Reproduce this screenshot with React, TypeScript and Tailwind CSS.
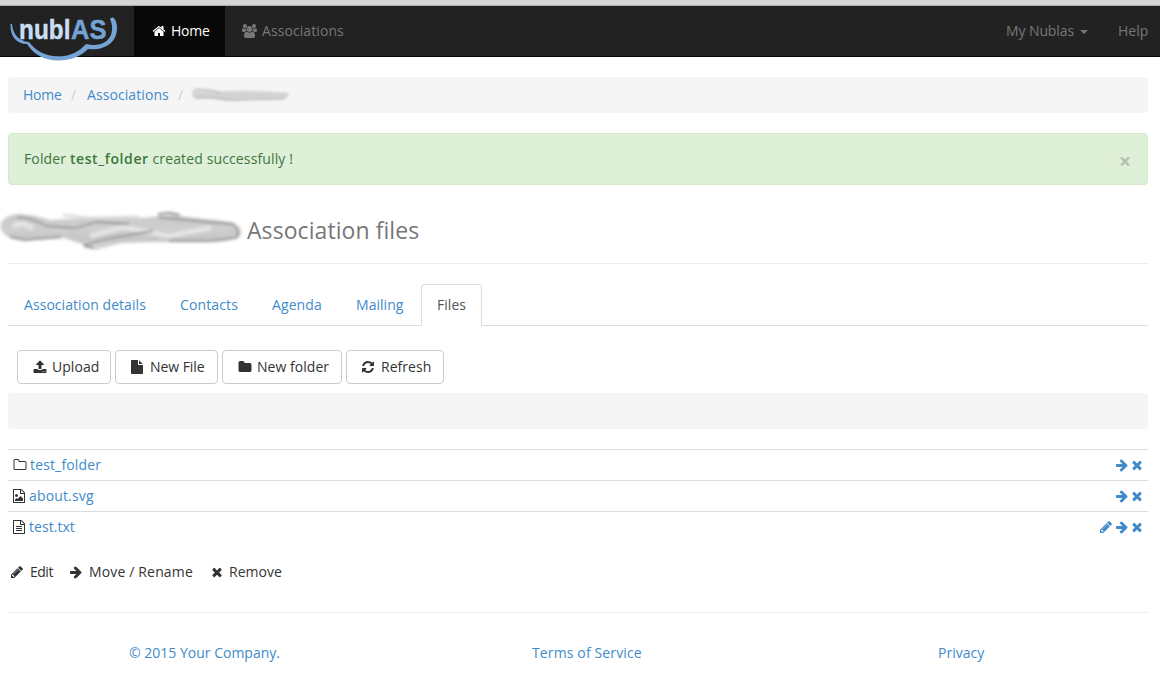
import type { ReactNode } from "react";

const paths = {
  home: "M1472 992v480q0 26-19 45t-45 19h-384v-384h-256v384h-384q-26 0-45-19t-19-45v-480q0-1 .5-3t.5-3l575-474 575 474q1 2 1 6zm223-69l-62 74q-8 9-21 11h-3q-13 0-21-7l-692-577-692 577q-12 8-24 7-13-2-21-11l-62-74q-8-10-7-23.5t11-21.5l719-599q32-26 76-26t76 26l244 204v-195q0-14 9-23t23-9h192q14 0 23 9t9 23v408l219 182q10 8 11 21.5t-7 23.5z",
  users: "M529 896q-162 5-265 128h-134q-82 0-138-40.5t-56-118.5q0-353 124-353 6 0 43.5 21t97.5 42.5 119 21.5q67 0 133-23-5 37-5 66 0 139 81 256zm1071 637q0 120-73 189.5t-194 69.5h-874q-121 0-194-69.5t-73-189.5q0-53 3.5-103.5t14-109 26.5-108.5 43-97.5 62-81 85.5-53.5 111.5-20q10 0 43 21.5t73 48 107 48 135 21.5 135-21.5 107-48 73-48 43-21.5q61 0 111.5 20t85.5 53.5 62 81 43 97.5 26.5 108.5 14 109 3.5 103.5zm-1024-1277q0 106-75 181t-181 75-181-75-75-181 75-181 181-75 181 75 75 181zm704 384q0 159-112.5 271.5t-271.5 112.5-271.5-112.5-112.5-271.5 112.5-271.5 271.5-112.5 271.5 112.5 112.5 271.5zm576 225q0 78-56 118.5t-138 40.5h-134q-103-123-265-128 81-117 81-256 0-29-5-66 66 23 133 23 59 0 119-21.5t97.5-42.5 43.5-21q124 0 124 353zm-128-609q0 106-75 181t-181 75-181-75-75-181 75-181 181-75 181 75 75 181z",
  upload: "M1344 1472q0-26-19-45t-45-19-45 19-19 45 19 45 45 19 45-19 19-45zm256 0q0-26-19-45t-45-19-45 19-19 45 19 45 45 19 45-19 19-45zm128-224v320q0 40-28 68t-68 28h-1472q-40 0-68-28t-28-68v-320q0-40 28-68t68-28h427q21 56 70.5 92t110.5 36h256q61 0 110.5-36t70.5-92h427q40 0 68 28t28 68zm-325-648q-17 40-59 40h-256v448q0 26-19 45t-45 19h-256q-26 0-45-19t-19-45v-448h-256q-42 0-59-40-17-39 14-69l448-448q18-19 45-19t45 19l448 448q31 30 14 69z",
  file: "M1152 512v-472q22 14 36 28l408 408q14 14 28 36h-472zm-128 32q0 40 28 68t68 28h544v1056q0 40-28 68t-68 28h-1344q-40 0-68-28t-28-68v-1600q0-40 28-68t68-28h800v544z",
  folder: "M1728 608v704q0 92-66 158t-158 66h-1216q-92 0-158-66t-66-158v-960q0-92 66-158t158-66h320q92 0 158 66t66 158v32h672q92 0 158 66t66 158z",
  refresh: "M1639 1056q0 5-1 7-64 268-268 434.5t-478 166.5q-146 0-282.5-55t-243.5-157l-129 129q-19 19-45 19t-45-19-19-45v-448q0-26 19-45t45-19h448q26 0 45 19t19 45-19 45l-137 137q71 66 161 102t187 36q134 0 250-65t186-179q11-17 53-117 8-23 30-23h192q13 0 22.5 9.5t9.5 22.5zm25-800v448q0 26-19 45t-45 19h-448q-26 0-45-19t-19-45 19-45l138-138q-148-137-349-137-134 0-250 65t-186 179q-11 17-53 117-8 23-30 23h-199q-13 0-22.5-9.5t-9.5-22.5v-7q65-268 270-434.5t480-166.5q146 0 284 55.5t245 156.5l130-129q19-19 45-19t45 19 19 45z",
  folderOpen: "M1600 1312v-704q0-40-28-68t-68-28h-704q-40 0-68-28t-28-68v-64q0-40-28-68t-68-28h-320q-40 0-68 28t-28 68v960q0 40 28 68t68 28h1216q40 0 68-28t28-68zm128-704v704q0 92-66 158t-158 66h-1216q-92 0-158-66t-66-158v-960q0-92 66-158t158-66h320q92 0 158 66t66 158v32h672q92 0 158 66t66 158z",
  text: "M1596 380q28 28 48 76t20 88v1152q0 40-28 68t-68 28h-1344q-40 0-68-28t-28-68v-1600q0-40 28-68t68-28h896q40 0 88 20t76 48zm-444-244v376h376q-10-29-22-41l-313-313q-12-12-41-22zm384 1528v-1024h-416q-40 0-68-28t-28-68v-416h-768v1536h1280zm-1024-864q0-14 9-23t23-9h704q14 0 23 9t9 23v64q0 14-9 23t-23 9h-704q-14 0-23-9t-9-23v-64zm736 224q14 0 23 9t9 23v64q0 14-9 23t-23 9h-704q-14 0-23-9t-9-23v-64q0-14 9-23t23-9h704zm0 256q14 0 23 9t9 23v64q0 14-9 23t-23 9h-704q-14 0-23-9t-9-23v-64q0-14 9-23t23-9h704z",
  image: "M1596 380q28 28 48 76t20 88v1152q0 40-28 68t-68 28h-1344q-40 0-68-28t-28-68v-1600q0-40 28-68t68-28h896q40 0 88 20t76 48zm-444-244v376h376q-10-29-22-41l-313-313q-12-12-41-22zm384 1528v-1024h-416q-40 0-68-28t-28-68v-416h-768v1536h1280zm-128-448v320h-1024v-192l192-192 128 128 384-384zm-832-192q-80 0-136-56t-56-136 56-136 136-56 136 56 56 136-56 136-136 56z",
  arrow: "M1600 960q0 54-37 91l-651 651q-39 37-91 37-51 0-90-37l-75-75q-38-38-38-91t38-91l293-293h-704q-52 0-84.5-37.5t-32.5-90.5v-128q0-53 32.5-90.5t84.5-37.5h704l-293-294q-38-36-38-90t38-90l75-75q38-38 90-38 53 0 91 38l651 651q37 35 37 90z",
  times: "M1490 1322q0 40-28 68l-136 136q-28 28-68 28t-68-28l-294-294-294 294q-28 28-68 28t-68-28l-136-136q-28-28-28-68t28-68l294-294-294-294q-28-28-28-68t28-68l136-136q28-28 68-28t68 28l294 294 294-294q28-28 68-28t68 28l136 136q28 28 28 68t-28 68l-294 294 294 294q28 28 28 68z",
  pencil: "M491 1536l91-91-235-235-91 91v107h128v128h107zm523-928q0-22-22-22-10 0-17 7l-542 542q-7 7-7 17 0 22 22 22 10 0 17-7l542-542q7-7 7-17zm-54-192l416 416-832 832h-416v-416zm683 96q0 53-37 90l-166 166-416-416 166-165q36-38 90-38 53 0 91 38l235 234q37 39 37 91z",
};

type IconName = keyof typeof paths;

function Icon({ name, className = "" }: { name: IconName; className?: string }) {
  const wide = name === "users";
  return (
    <svg
      viewBox={wide ? "-64 0 1920 1792" : "0 0 1792 1792"}
      className={`${wide ? "w-[15px]" : "w-[14px]"} h-[14px] shrink-0 overflow-visible fill-current ${className}`}
    >
      <path d={paths[name]} />
    </svg>
  );
}

function Logo() {
  return (
    <svg viewBox="9 15 110 48" className="relative z-10 ml-[9px] mt-[9px] h-12 w-[110px] shrink-0 overflow-visible">
      <path
        d="M10.5 24C10 36 16 44 27 44C35 56 46 60.5 58 60.5C71 60.5 81 56 88 49C104 51 117 43 117 28C117 23 115.500 19 113 17.500Q111 17 110 19C115 29 112 46 92 45L86 44C78 53 69 56.300 58 56.300C45 56 36 51 29 42C19 41 13 35 12 24Z"
        fill="#75a3d5"
      />
      <g fontFamily="Liberation Sans" fontWeight="700" fontSize="28.500" strokeWidth=".5">
        <text x="19" y="38.500" textLength="51.500" lengthAdjust="spacingAndGlyphs" fill="#c9def2" stroke="#c9def2">nubl</text>
        <text x="71" y="38.500" textLength="35.500" lengthAdjust="spacingAndGlyphs" fill="#75a3d5" stroke="#75a3d5">AS</text>
      </g>
    </svg>
  );
}

function Tab({ children, className }: { children: ReactNode; className: string }) {
  return <a className={`h-[42px] shrink-0 whitespace-nowrap pl-4 pt-[11px] ${className}`}>{children}</a>;
}

function Button({ icon, iconClass = "mr-[5px]", children, className }: { icon: IconName; iconClass?: string; children: ReactNode; className: string }) {
  return (
    <button className={`flex h-[34px] items-center whitespace-nowrap rounded border border-[#ccc] pl-[15px] ${className}`}>
      <Icon name={icon} className={iconClass} />
      {children}
    </button>
  );
}

function Row({ icon, iconClass, name, editable, className }: { icon: IconName; iconClass: string; name: string; editable?: boolean; className: string }) {
  return (
    <div className="flex h-[31px] items-center border-t border-[#ddd] pl-1 pr-1 text-[#428bca]">
      <Icon name={icon} className={`text-[#333] ${iconClass}`} />
      <a className={`flex-1 ${className}`}>{name}</a>
      {editable && <Icon name="pencil" className="mr-[2px]" />}
      <Icon name="arrow" className="mr-[1px]" />
      <Icon name="times" />
    </div>
  );
}

export default function App() {
  return (
    <div className="h-[699px] w-[1160px] overflow-hidden bg-white font-['Open_Sans',sans-serif] text-[14px] leading-5 tracking-[0.04px] text-[#333]">
      <div className="h-[6px] border-b border-[#a7aea7] bg-[#d5d5d5]" />
      <nav className="flex h-[51px] border-b border-[#080808] bg-[#222] text-[#777]">
        <div className="w-[134px]"><Logo /></div>
        <a className="flex w-[91px] items-center bg-[#080808] pl-[18px] text-white">
          <Icon name="home" className="mr-[5px]" /><span className="tracking-[-0.2px]">Home</span>
        </a>
        <a className="flex flex-1 items-center pl-[17px] tracking-[0.08px]">
          <Icon name="users" className="mr-[5px]" />Associations
        </a>
        <a className="flex w-[112px] items-center">
          <span className="w-[74px] whitespace-nowrap tracking-[-0.1px]">My Nublas</span>
          <span className="mt-px border-x-4 border-t-4 border-x-transparent border-t-[#777]" />
        </a>
        <a className="flex w-[42px] items-center">Help</a>
      </nav>

      <main className="ml-2 w-[1140px]">
        <ol className="mt-5 flex h-9 items-center rounded bg-[#f5f5f5] pl-[15px] text-[#428bca]">
          <li className="w-[48px] tracking-[-0.2px]">Home</li>
          <li className="w-[16px] text-[#ccc]">/</li>
          <li className="w-[91px] tracking-[0.08px]">Associations</li>
          <li className="w-[13px] text-[#ccc]">/</li>
          <li>
            <svg viewBox="0 0 100 20" className="h-5 w-[100px]">
              <defs>
                <filter id="soft" x="-5%" y="-30%" width="110%" height="160%"><feGaussianBlur stdDeviation="1.1" /></filter>
                <linearGradient id="small" x2="0" y2="1">
                  <stop stopColor="#e4e4e4" /><stop offset=".45" stopColor="#d0d0d0" /><stop offset="1" stopColor="#dcdcdc" />
                </linearGradient>
              </defs>
              <g filter="url(#soft)">
                <path d="M3 4Q15 3 29 6L58 5L98 8L95 14L59 15L36 17L22 14L3 13Q-1 8 3 4Z" fill="url(#small)" />
                <path d="M4 13L28 13L45 15L93 14M4 4Q17 4 30 8" fill="none" stroke="#b4b4b4" strokeWidth="1.200" />
              </g>
            </svg>
          </li>
        </ol>

        <div className="mt-5 flex h-[52px] items-center justify-between rounded border border-[#d6e9c6] bg-[#dff0d8] pl-[15px] pr-4 text-[#3c763d]">
          <p className="tracking-[0.13px]">Folder <b className="font-semibold tracking-[0.6px]">test_folder</b> created successfully !</p>
          <span className="mt-1 text-[21px] font-bold text-[#b2c0ad]">×</span>
        </div>

        <h1 className="flex h-[79px] items-center border-b border-[#eee] pt-[13px] text-[23px] text-[#777]">
          <svg viewBox="0 0 247 44" className="-ml-2 h-11 w-[247px] shrink-0">
            <defs>
              <filter id="smear" x="-5%" y="-20%" width="110%" height="140%"><feGaussianBlur stdDeviation="1.8" /></filter>
              <linearGradient id="large" x2="0" y2="1">
                <stop stopColor="#c8c8c8" /><stop offset=".4" stopColor="#cfcfcf" /><stop offset=".7" stopColor="#c6c6c6" /><stop offset="1" stopColor="#d8d8d8" />
              </linearGradient>
            </defs>
            <g filter="url(#smear)">
              <path d="M1 14Q6 5 20 5Q35 6 50 11L92 9L142 9L172 6L231 13Q243 17 241 26Q236 32 213 33L155 33L121 34L96 41L79 34L65 29L24 31Q-2 29 1 14Z" fill="url(#large)" />
              <path d="M63 6L87 9L139 8" fill="none" stroke="#ddd" strokeWidth="3" />
              <path d="M13 18Q22 11 33 20M90 27L124 18L168 27L211 19" fill="none" stroke="#e4e4e4" strokeWidth="5" />
              <path d="M17 9Q26 7 47 17L75 19L97 13L129 15M158 8L185 11L232 15Q241 21 236 29L210 32L169 32M84 36L112 29L153 22M10 28L24 31L61 28" fill="none" stroke="#949494" strokeWidth="1.800" />
              <path d="M158 5L170 4L180 6M84 37L94 39" stroke="#666" strokeWidth="1.300" fill="none" />
            </g>
          </svg>
          <span className="pb-[2px] tracking-[0.07px]">Association files</span>
        </h1>

        <div className="mt-5 flex h-[42px] text-[#428bca] shadow-[inset_0_-1px_#ddd]">
          <Tab className="w-[156px] tracking-[0.06px]">Association details</Tab>
          <Tab className="w-[92px] tracking-[0.13px]">Contacts</Tab>
          <Tab className="w-[84px] tracking-[0.1px]">Agenda</Tab>
          <Tab className="w-[81px]">Mailing</Tab>
          <Tab className="w-[61px] rounded-t border border-b-0 border-[#ddd] bg-white !pl-[15px] !pt-[10px] text-[#555]">Files</Tab>
        </div>

        <div className="ml-[9px] mt-6 flex gap-1">
          <Button icon="upload" className="w-[94px]">Upload</Button>
          <Button icon="file" iconClass="-ml-[1px] mr-[6px]" className="w-[103px] tracking-[-0.05px]">New File</Button>
          <Button icon="folder" className="w-[120px]">New folder</Button>
          <Button icon="refresh" iconClass="-ml-[1px] mr-[6px]" className="w-[98px]">Refresh</Button>
        </div>
        <div className="mb-5 mt-[9px] h-9 rounded bg-[#f5f5f5]" />

        <Row icon="folderOpen" iconClass="ml-[1px] mr-[3px]" name="test_folder" className="tracking-[0.15px]" />
        <Row icon="image" iconClass="mr-[3px]" name="about.svg" className="tracking-[0.15px]" />
        <Row icon="text" iconClass="mr-[3px]" name="test.txt" editable className="tracking-[0.05px]" />

        <div className="mt-5 flex h-5 items-center pl-[2px]">
          <Icon name="pencil" className="mr-[6px]" /><span className="w-[39px] tracking-[-0.5px]">Edit</span>
          <Icon name="arrow" className="mr-[6px]" /><span className="w-[121px] whitespace-nowrap tracking-[0.15px]">Move / Rename</span>
          <Icon name="times" className="mr-[5px]" /><span>Remove</span>
        </div>

        <footer className="mt-[30px] flex border-t border-[#eee] pt-[30px] text-[#428bca]">
          <a className="ml-[121px] w-[403px] tracking-normal">© 2015 Your Company.</a>
          <a className="w-[406px] tracking-[0.13px]">Terms of Service</a>
          <a className="tracking-normal">Privacy</a>
        </footer>
      </main>
    </div>
  );
}
